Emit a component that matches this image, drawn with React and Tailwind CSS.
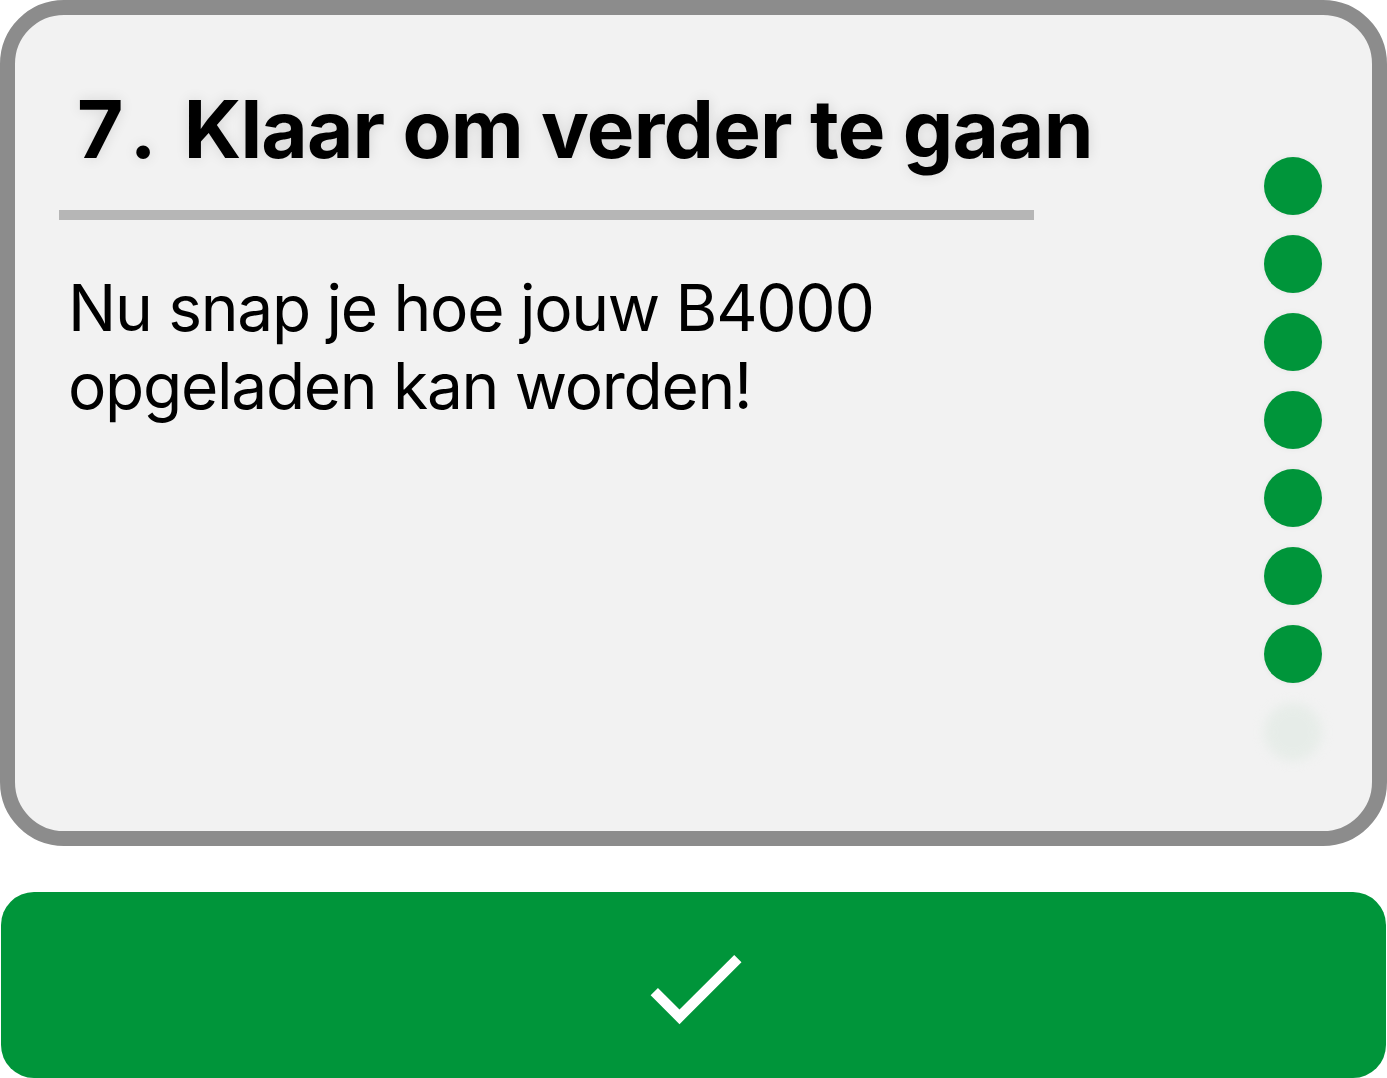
import React from 'react';

const dots = [true, true, true, true, true, true, true, false];

const StepDots = ({ items }) => (
    <div className="flex flex-col gap-[20px] pt-[142px]">
        {items.map((done, i) => (
            <div
                key={i}
                className={done
                    ? 'w-[58px] h-[58px] rounded-full bg-[#00953a] shadow-[0_0_6px_rgba(0,0,0,0.06)]'
                    : 'w-[58px] h-[58px] rounded-full bg-[#dfe9e2] opacity-60 blur-[6px]'}
            />
        ))}
    </div>
);

const App = () => (
    <div className="w-[1387px] h-[1078px] bg-white flex flex-col font-['Inter',sans-serif]">
        <div className="h-[846px] rounded-[64px] border-[15px] border-[#8c8c8c] bg-[#f2f2f2] flex">
            <div className="flex-1 pl-[44px] pt-[74px]">
                <h1 className="ml-[18px] text-[80px] leading-[1] font-bold tracking-[-0.01em] text-black [text-shadow:0_0_14px_rgba(0,0,0,0.12)]">
                    <span>7</span><span className="ml-[7px]">.</span><span className="ml-[28px]">Klaar om verder te gaan</span>
                </h1>
                <div className="mt-[41px] w-[975px] h-[10px] bg-[#b6b6b6]" />
                <p className="mt-[49px] ml-[9px] text-[64px] leading-[78px] tracking-[-0.02em] text-black">
                    Nu snap je hoe jouw B4000<br />opgeladen kan worden!
                </p>
            </div>
            <div className="pr-[50px]">
                <StepDots items={dots} />
            </div>
        </div>
        <button className="mt-[46px] mx-[1px] h-[186px] rounded-[33px] bg-[#00953a] flex items-center justify-center">
            <svg className="mt-[6px] ml-[2px]" width="124" height="124" viewBox="0 0 24 24" fill="#ffffff">
                <path d="M9 16.17L4.83 12l-1.42 1.41L9 19 21 7l-1.41-1.41z" />
            </svg>
        </button>
    </div>
);

export default App;
